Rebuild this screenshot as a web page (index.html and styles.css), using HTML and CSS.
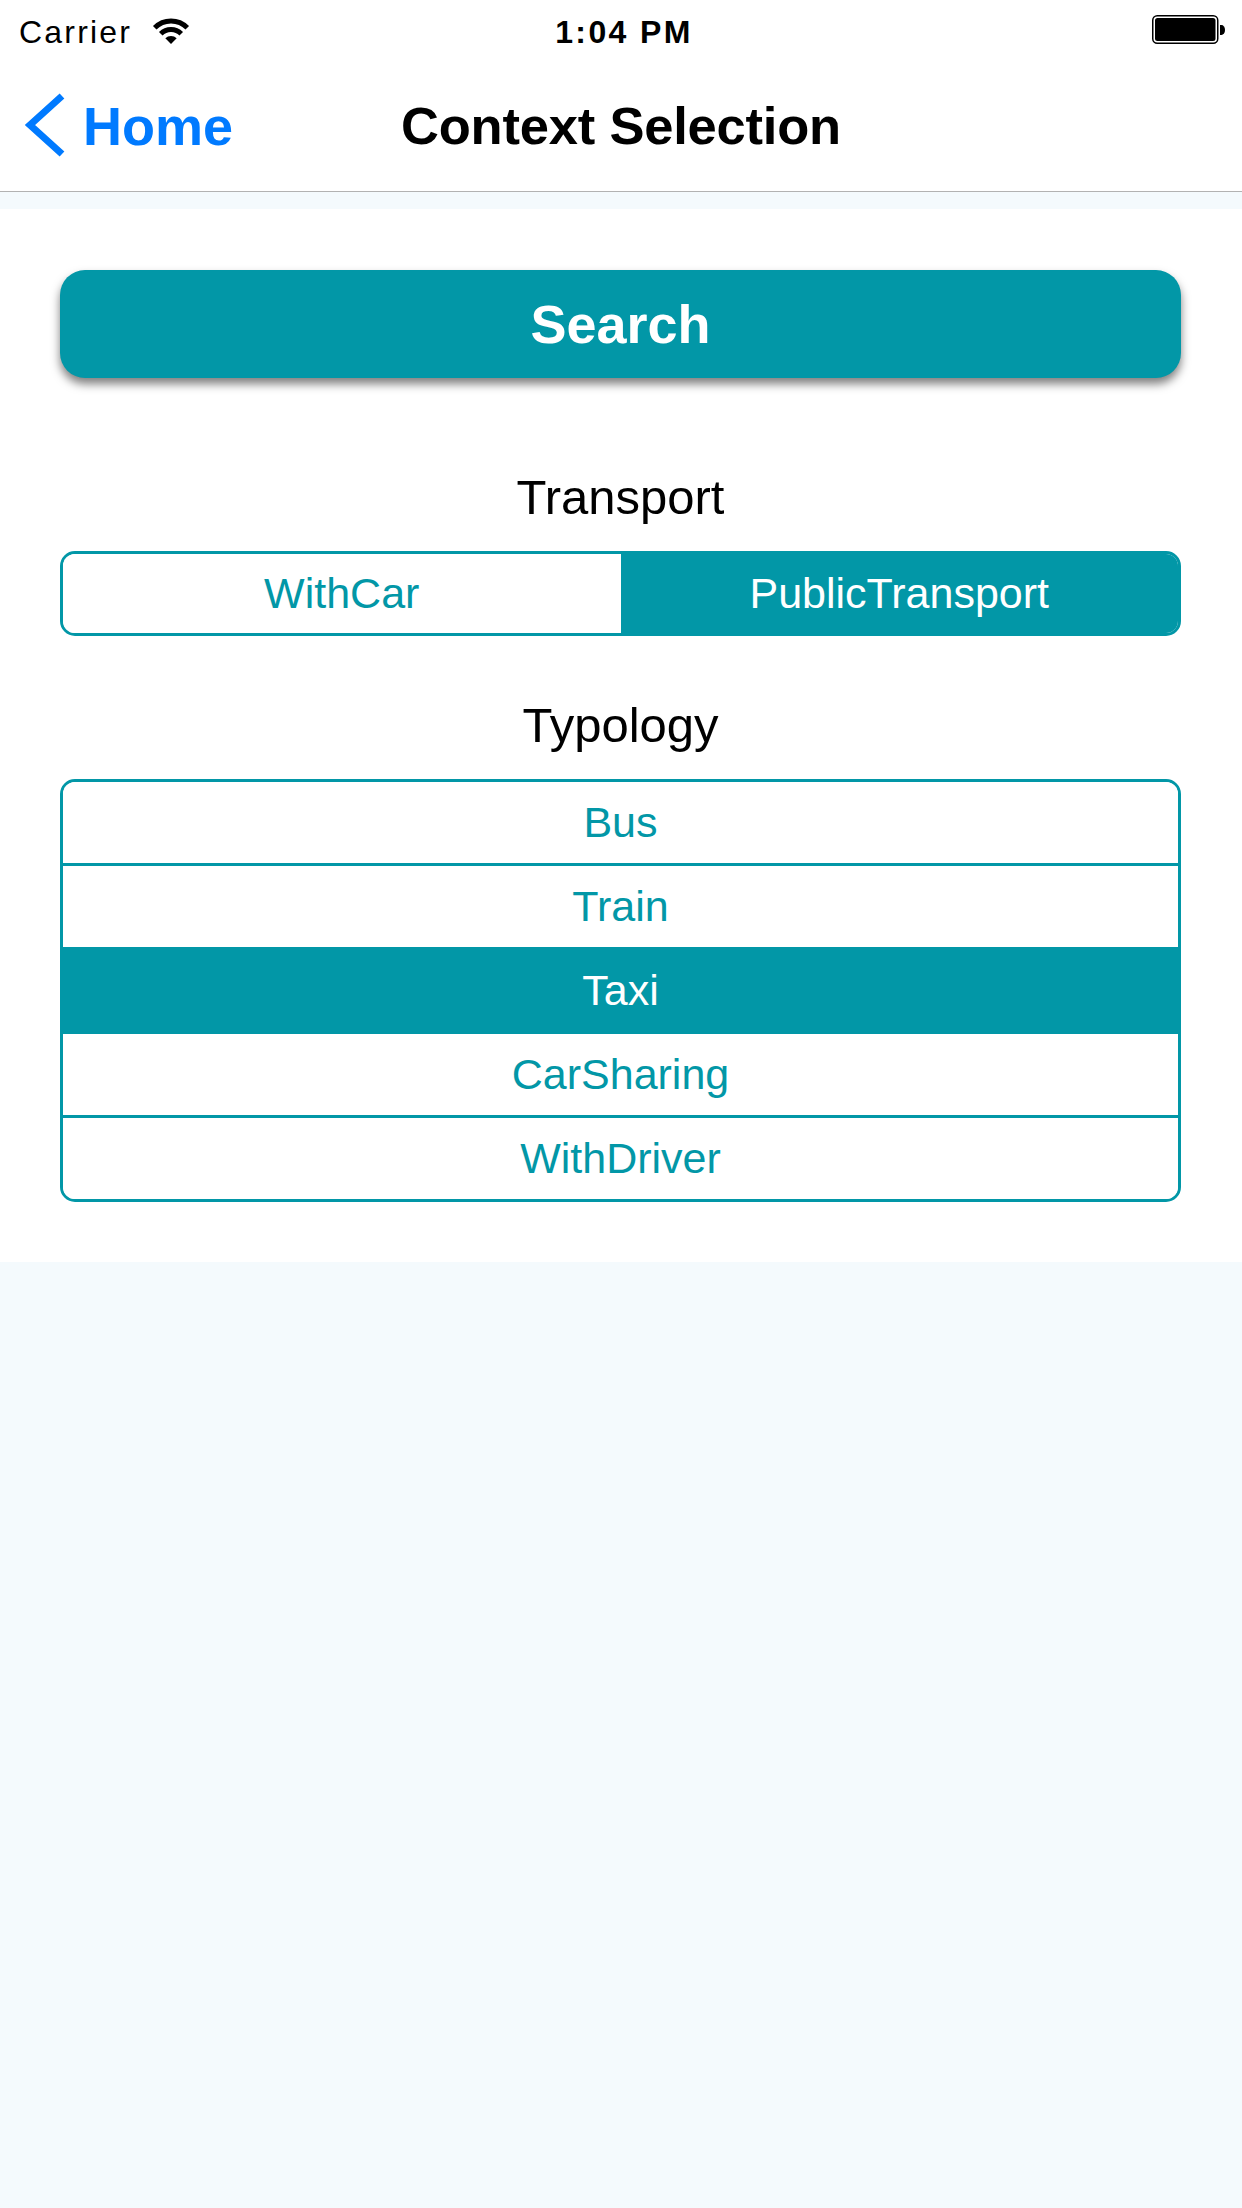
FILE: index.html
```html
<!DOCTYPE html>
<html>
<head>
<meta charset="utf-8">
<link rel="stylesheet" href="styles.css">
</head>
<body>
<div class="screen">
  <div class="status">
    <div class="status-left">
      <span class="carrier">Carrier</span>
      <svg class="wifi" width="38" height="28" viewBox="0 0 38 28">
        <path d="M19 27 L13.34 21.34 A8 8 0 0 1 24.66 21.34 Z" fill="#000"/>
        <path d="M8.75 16.75 A14.5 14.5 0 0 1 29.25 16.75" fill="none" stroke="#000" stroke-width="5"/>
        <path d="M2.74 10.74 A23 23 0 0 1 35.26 10.74" fill="none" stroke="#000" stroke-width="5"/>
      </svg>
    </div>
    <div class="time">1:04 PM</div>
    <div class="status-right">
      <svg class="battery" width="74" height="30" viewBox="0 0 74 30">
        <rect x="0.75" y="0.75" width="65" height="27.5" rx="4.5" fill="none" stroke="#000" stroke-width="1.5"/>
        <rect x="3" y="3" width="60.5" height="23" rx="2.5" fill="#000"/>
        <path d="M68 10 h1.5 a3.5 5 0 0 1 0 10 h-1.5 Z" fill="#000"/>
      </svg>
    </div>
  </div>

  <div class="nav">
    <div class="nav-left">
      <div class="back">
        <svg class="chev" width="46" height="66" viewBox="0 0 46 66">
          <polyline points="42,3 10,32 42,61" fill="none" stroke="#007aff" stroke-width="7" stroke-linejoin="miter"/>
        </svg>
        <span class="back-label">Home</span>
      </div>
    </div>
    <div class="nav-title">Context Selection</div>
    <div class="nav-right"></div>
  </div>

  <div class="main">
    <div class="card">
      <div class="search-btn">Search</div>

      <div class="label label-transport">Transport</div>
      <div class="segmented">
        <div class="seg">WithCar</div>
        <div class="seg seg-active">PublicTransport</div>
      </div>

      <div class="label label-typology">Typology</div>
      <div class="list">
        <div class="row">Bus</div>
        <div class="row">Train</div>
        <div class="row row-active">Taxi</div>
        <div class="row">CarSharing</div>
        <div class="row">WithDriver</div>
      </div>
    </div>
  </div>
</div>
</body>
</html>
```

FILE: styles.css
```css
html, body {
  margin: 0;
  padding: 0;
}

body {
  width: 1242px;
  height: 2208px;
  background: #f4fafd;
  font-family: "Liberation Sans", Arial, sans-serif;
  color: #000;
  overflow: hidden;
}

.screen {
  width: 1242px;
  min-height: 2208px;
  background: #f4fafd;
}

/* Status bar */
.status {
  height: 60px;
  background: #fff;
  display: grid;
  grid-template-columns: 1fr auto 1fr;
  align-items: start;
  box-sizing: border-box;
  padding-top: 4px;
}

.status-left {
  display: flex;
  align-items: flex-start;
  padding-left: 19px;
}

.carrier {
  font-size: 32px;
  line-height: 56px;
  letter-spacing: 2.2px;
}

.wifi {
  margin-left: 20px;
  margin-top: 13px;
}

.time {
  font-size: 32px;
  font-weight: bold;
  line-height: 56px;
  letter-spacing: 2.4px;
  margin-left: 6px;
}

.status-right {
  display: flex;
  justify-content: flex-end;
  padding-right: 16px;
}

.battery {
  margin-top: 11px;
}

/* Navigation bar */
.nav {
  height: 131px;
  background: #fff;
  border-bottom: 1px solid #b2b2b2;
  display: grid;
  grid-template-columns: 1fr auto 1fr;
  align-items: center;
}

.back {
  display: flex;
  align-items: center;
  padding-left: 20px;
}

.chev {
  display: block;
}

.back-label {
  margin-left: 17px;
  font-size: 54px;
  font-weight: bold;
  color: #007aff;
  line-height: 54px;
}

.nav-title {
  font-size: 52.5px;
  font-weight: bold;
  line-height: 52px;
  letter-spacing: -0.2px;
}

/* Main */
.main {
  padding-top: 17px;
}

.card {
  background: #fff;
  padding: 61px 61px 60px 60px;
  display: flex;
  flex-direction: column;
}

.search-btn {
  height: 108px;
  border-radius: 25px;
  background: #0297a7;
  color: #fff;
  font-size: 54px;
  font-weight: bold;
  line-height: 108px;
  text-align: center;
  box-shadow: 0 6px 10px rgba(0, 0, 0, 0.5);
}

.label {
  font-size: 49px;
  line-height: 56px;
  text-align: center;
}

.label-transport {
  margin-top: 91px;
}

.label-typology {
  margin-top: 61px;
}

.segmented {
  margin-top: 26px;
  height: 85px;
  box-sizing: border-box;
  border: 3px solid #0297a7;
  border-radius: 15px;
  overflow: hidden;
  display: flex;
}

.seg {
  flex: 1;
  font-size: 43px;
  line-height: 79px;
  text-align: center;
  color: #0297a7;
  background: #fff;
}

.seg-active {
  background: #0297a7;
  color: #fff;
}

.list {
  margin-top: 26px;
  border: 3px solid #0297a7;
  border-radius: 15px;
  overflow: hidden;
  display: flex;
  flex-direction: column;
}

.row {
  height: 81px;
  font-size: 43px;
  line-height: 81px;
  text-align: center;
  color: #0297a7;
  background: #fff;
}

.row + .row {
  border-top: 3px solid #0297a7;
}

.row-active {
  background: #0297a7;
  color: #fff;
}
```
